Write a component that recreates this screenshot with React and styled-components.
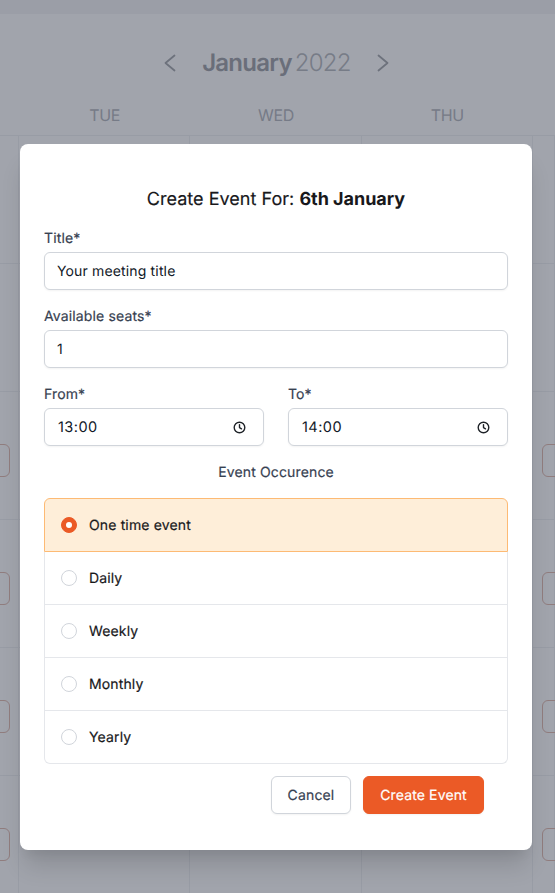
import React from "react";
import styled, { createGlobalStyle, css } from "styled-components";

const Global = createGlobalStyle`
  html, body { margin: 0; padding: 0; height: 100%; background: #fff; overflow: hidden; }
  * { box-sizing: border-box; }
  body { font-family: Inter, "Liberation Sans", sans-serif; text-rendering: geometricPrecision; }
  input, button { text-rendering: geometricPrecision; }
`;

const mediumText = css`
  font-weight: 400;
  letter-spacing: 0.14px;
  -webkit-text-stroke: 0.18px currentColor;
`;

const Page = styled.div`
  position: relative;
  height: 100vh;
  overflow: hidden;
  display: flex;
  flex-direction: column;
`;
const TopStrip = styled.div`
  height: 14px;
  flex: none;
  background: #f3f3f4;
`;
const MonthBar = styled.div`
  height: 96px;
  flex: none;
  display: flex;
  align-items: center;
  justify-content: center;
  padding: 2px 2px 0 0;
  gap: 20px;
  color: #93969c;
`;
const MonthTitle = styled.div`
  font-size: 24px;
  line-height: 32px;
  letter-spacing: -0.75px;
  word-spacing: -3px;
  color: #a8abb1;
  white-space: nowrap;
  font-weight: 300;
  b { font-weight: 600; color: #8c8f96; }
`;
const DayHeader = styled.div`
  display: grid;
  grid-template-columns: 19px repeat(3, 171.33px) 1fr;
  height: 26px;
  flex: none;
  border-bottom: 1px solid #eceef1;
`;
const DayName = styled.div`
  font-size: 16px;
  line-height: 11px;
  letter-spacing: -0.3px;
  text-align: center;
  color: #a6a9b1;
`;
const Grid = styled.div`
  flex: 1;
  display: grid;
  grid-template-columns: 19px repeat(3, 171.33px) 1fr;
  grid-auto-rows: 128px;
`;
const Cell = styled.div`
  border-bottom: 1px solid #eceef1;
  border-right: 1px solid #eceef1;
  display: flex;
  align-items: flex-start;
  padding-top: 52px;
  justify-content: ${(p) => (p.$end ? "flex-end" : "flex-start")};
  padding-right: ${(p) => (p.$end ? "8px" : "0")};
  padding-left: ${(p) => (p.$start ? "9px" : "0")};
  min-width: 0;
`;
const Slot = styled.div`
  flex: none;
  width: 60px;
  height: 33px;
  border: 1px solid #dcae9f;
  border-radius: 6px;
`;

const Overlay = styled.div`
  position: absolute;
  inset: 0;
  background: rgba(75, 80, 95, 0.52);
`;
const Modal = styled.div`
  position: absolute;
  left: 20px;
  top: 144px;
  width: 512px;
  height: 706px;
  background: #fff;
  border-radius: 8px;
  padding: 42px 24px 36px;
  box-shadow: 0 20px 25px -5px rgba(0, 0, 0, 0.14), 0 10px 10px -5px rgba(0, 0, 0, 0.05);
  display: flex;
  flex-direction: column;
`;
const Title = styled.h2`
  margin: 0 0 14px;
  font-size: 18px;
  line-height: 28px;
  ${mediumText}
  letter-spacing: 0.03px;
  text-align: center;
  color: #18181b;
  b { font-weight: 700; letter-spacing: -0.03px; -webkit-text-stroke: 0; }
`;
const Field = styled.div`
  flex: 1;
  min-width: 0;
  margin-bottom: 16px;
`;
const Label = styled.label`
  display: block;
  padding-top: 1px;
  font-size: 14px;
  line-height: 20px;
  ${mediumText}
  color: #374151;
  margin-bottom: 3px;
`;
const InputBox = styled.div`
  height: 38px;
  border: 1px solid #d1d5db;
  border-radius: 6px;
  box-shadow: 0 1px 2px rgba(0, 0, 0, 0.05);
  background: #fff;
  display: flex;
  align-items: center;
  justify-content: space-between;
  padding: 0 17px 0 12px;
`;
const Input = styled.input`
  flex: 1;
  min-width: 0;
  border: 0;
  outline: 0;
  padding: 0 0 0 ${(p) => (p.$time ? "1px" : "0")};
  background: transparent;
  font-family: inherit;
  font-size: ${(p) => (p.$time ? "14.5px" : "14px")};
  letter-spacing: ${(p) => (p.$time ? "0.45px" : "0.15px")};
  font-weight: 400;
  color: #111827;
`;
const Row = styled.div`
  display: flex;
  gap: 24px;
`;
const Occurence = styled.div`
  padding-top: 1px;
  font-size: 14px;
  line-height: 20px;
  ${mediumText}
  color: #374151;
  text-align: center;
  margin-bottom: 15px;
`;
const RadioList = styled.div`
  display: flex;
  flex-direction: column;
`;
const Option = styled.label`
  height: ${(p) => (p.$first ? "54px" : "53px")};
  display: flex;
  align-items: center;
  gap: 12px;
  padding-left: 16px;
  font-size: 14px;
  ${mediumText}
  color: #18181b;
  background: ${(p) => (p.$checked ? "#feeed9" : "#fff")};
  border: 1px solid ${(p) => (p.$checked ? "#fdba74" : "#e5e7eb")};
  border-top-width: ${(p) => (p.$checked || p.$first ? "1px" : "0")};
  border-radius: ${(p) => (p.$first ? "6px 6px 0 0" : p.$last ? "0 0 6px 6px" : "0")};
`;
const Radio = styled.span`
  flex: none;
  width: 16px;
  height: 16px;
  border-radius: 50%;
  display: flex;
  align-items: center;
  justify-content: center;
  background: ${(p) => (p.$checked ? "#eb5a26" : "#fff")};
  border: 1px solid ${(p) => (p.$checked ? "#eb5a26" : "#d1d5db")};
  &::after {
    content: "";
    width: 6px;
    height: 6px;
    border-radius: 50%;
    background: ${(p) => (p.$checked ? "#fff" : "transparent")};
  }
`;
const Actions = styled.div`
  display: flex;
  justify-content: flex-end;
  gap: 12px;
  margin-top: 12px;
  padding-right: 24px;
`;
const Button = styled.button`
  width: ${(p) => (p.$primary ? "121px" : "80px")};
  height: 38px;
  padding: 0;
  border-radius: 6px;
  font-family: inherit;
  font-size: 14px;
  ${mediumText}
  color: ${(p) => (p.$primary ? "#fff" : "#374151")};
  background: ${(p) => (p.$primary ? "#eb5a26" : "#fff")};
  border: 1px solid ${(p) => (p.$primary ? "#eb5a26" : "#d1d5db")};
  box-shadow: 0 1px 2px rgba(0, 0, 0, 0.05);
`;

const Chevron = ({ dir }) => (
  <svg width="24" height="24" viewBox="0 0 24 24" fill="none" stroke="currentColor" strokeWidth="1.8" strokeLinecap="round" strokeLinejoin="round">
    <path d={dir === "left" ? "M16.5 4.5 7.5 12l9 7.5" : "M7.5 4.5 16.5 12l-9 7.5"} />
  </svg>
);

const ClockIcon = () => (
  <svg width="13" height="13" viewBox="0 0 13 13" fill="none" stroke="#1f2328" strokeWidth="1.4" strokeLinecap="round" strokeLinejoin="round">
    <circle cx="6.5" cy="6.5" r="5.3" />
    <path d="M6.5 3.6v3l2 1.2" />
  </svg>
);

const TextField = ({ label, value }) => (
  <Field>
    <Label>{label}</Label>
    <InputBox>
      <Input defaultValue={value} />
    </InputBox>
  </Field>
);

const TimeField = ({ label, value }) => (
  <Field>
    <Label>{label}</Label>
    <InputBox>
      <Input $time defaultValue={value} />
      <ClockIcon />
    </InputBox>
  </Field>
);

const options = ["One time event", "Daily", "Weekly", "Monthly", "Yearly"];
const rows = [false, false, true, true, true, true];

export default function App() {
  return (
    <Page>
      <Global />
      <TopStrip />
      <MonthBar>
        <Chevron dir="left" />
        <MonthTitle>
          <b>January</b> 2022
        </MonthTitle>
        <Chevron dir="right" />
      </MonthBar>
      <DayHeader>
        <span />
        <DayName>TUE</DayName>
        <DayName>WED</DayName>
        <DayName>THU</DayName>
        <span />
      </DayHeader>
      <Grid>
        {rows.map((slot, r) => (
          <React.Fragment key={r}>
            <Cell $end>{slot && <Slot />}</Cell>
            <Cell />
            <Cell />
            <Cell />
            <Cell $start>{slot && <Slot />}</Cell>
          </React.Fragment>
        ))}
      </Grid>
      <Overlay />
      <Modal>
        <Title>
          Create Event For: <b>6th January</b>
        </Title>
        <TextField label="Title*" value="Your meeting title" />
        <TextField label="Available seats*" value="1" />
        <Row>
          <TimeField label="From*" value="13:00" />
          <TimeField label="To*" value="14:00" />
        </Row>
        <Occurence>Event Occurence</Occurence>
        <RadioList>
          {options.map((o, i) => (
            <Option key={o} $checked={i === 0} $first={i === 0} $last={i === options.length - 1}>
              <Radio $checked={i === 0} />
              {o}
            </Option>
          ))}
        </RadioList>
        <Actions>
          <Button>Cancel</Button>
          <Button $primary>Create Event</Button>
        </Actions>
      </Modal>
    </Page>
  );
}
